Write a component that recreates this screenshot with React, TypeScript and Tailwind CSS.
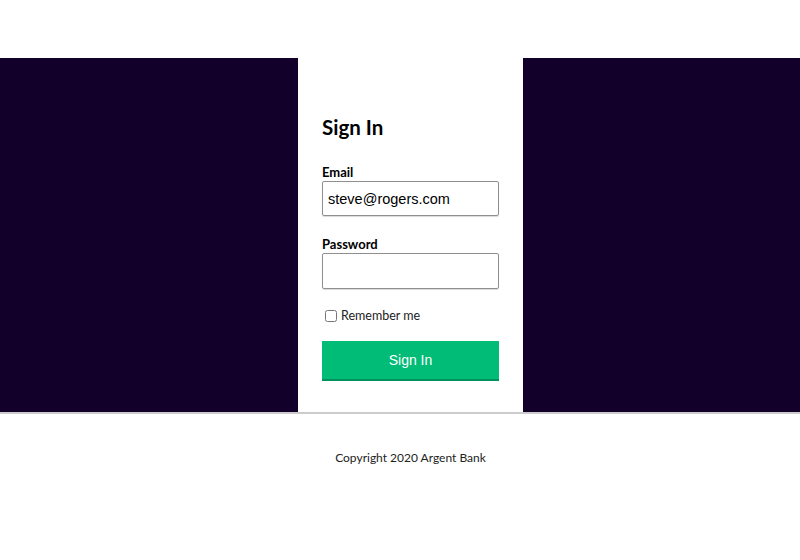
import React from 'react';

export default function App() {
  return (
    <div className="w-[800px] h-[560px] bg-white flex flex-col">
      {/* header (empty in this capture) */}
      <header className="h-[58px] bg-white" />

      <main className="h-[354px] bg-[#12002b] flex justify-center pl-[21px]">
        <section className="w-[225px] bg-white px-6 pt-[55px] pb-[31px] flex flex-col">
          <h1 className="h-[28px] leading-[28px] text-[20.5px] font-bold text-black font-['Lato',sans-serif]">
            Sign In
          </h1>

          <label className="mt-[22px] h-[18px] leading-[18px] text-[13px] font-bold text-black font-['Lato',sans-serif]">
            Email
          </label>
          <input
            type="text"
            defaultValue="steve@rogers.com"
            className="h-[35px] w-full border border-[#8f8f8f] rounded-[2px] px-[5px] text-[14.5px] text-black font-['Liberation_Sans',Arial,sans-serif] shadow-[0_1px_1px_rgba(0,0,0,0.15)]"
          />

          <label className="mt-[19px] h-[18px] leading-[18px] text-[13px] font-bold text-black font-['Lato',sans-serif]">
            Password
          </label>
          <input
            type="password"
            className="h-[36px] w-full border border-[#8f8f8f] rounded-[2px] px-[5px] text-[14.5px] font-['Liberation_Sans',Arial,sans-serif] shadow-[0_1px_1px_rgba(0,0,0,0.15)]"
          />

          <div className="mt-[18px] h-[18px] flex items-center gap-[4px] pl-[3px]">
            <input type="checkbox" className="w-[12px] h-[12px] m-0" />
            <span className="text-[12.5px] text-[#222] font-['Lato',sans-serif]">Remember me</span>
          </div>

          <button className="mt-[16px] h-[40px] w-full bg-[#00bc77] border-b-2 border-[#00925c] text-white text-[14px] font-['Liberation_Sans',Arial,sans-serif]">
            Sign In
          </button>
        </section>
      </main>

      <footer className="border-t-2 border-[#ccc] flex justify-center pl-[21px] pt-[36px]">
        <p className="h-[16px] leading-[16px] text-[12px] text-[#222] font-['Lato',sans-serif]">
          Copyright 2020 Argent Bank
        </p>
      </footer>
    </div>
  );
}
